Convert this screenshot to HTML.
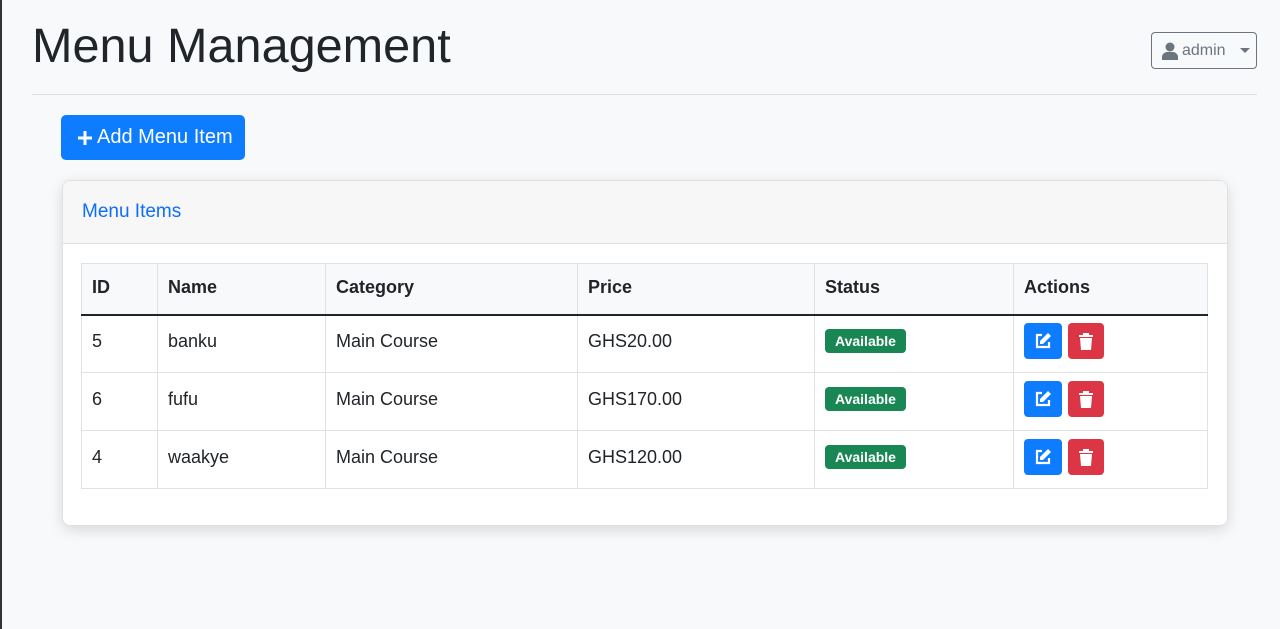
<!DOCTYPE html>
<html><head><style>
*{box-sizing:border-box}
body{margin:0;width:1280px;height:629px;background:#f8f9fa;font-family:"Liberation Sans",sans-serif;color:#212529;position:relative;overflow:hidden}
.lb{position:absolute;left:0;top:0;width:2px;height:629px;background:#333}
h1{position:absolute;left:32px;top:14px;margin:0;font-size:48.6px;font-weight:400;line-height:64px}
.hr{position:absolute;left:32px;top:94px;width:1225px;height:1px;background:#dcdee0}
.user{position:absolute;left:1151px;top:32px;width:106px;height:37px;border:1px solid #6c757d;border-radius:4px;color:#6c757d;font-size:16px;display:flex;align-items:center;padding-left:10px;gap:4px}
.caret{width:0;height:0;border-left:5px solid transparent;border-right:5px solid transparent;border-top:5px solid #6c757d;margin-left:10px}
.add{position:absolute;left:61px;top:115px;width:184px;height:45px;background:#0d7cff;border-radius:5px;color:#fff;font-size:20px;display:flex;align-items:center;padding-left:16px;gap:4px}
.card{position:absolute;left:62px;top:180px;width:1166px;height:346px;background:#fff;border:1px solid #dfe1e3;border-radius:8px;box-shadow:0 4px 14px rgba(0,0,0,.13);overflow:hidden}
.ch{height:63px;background:#f7f7f7;border-bottom:1px solid #dfe1e3;color:#0d6efd;font-size:19px;padding:20px 0 0 19px}
table{position:absolute;left:18px;top:82px;width:1127px;border-collapse:collapse;font-size:18px}
td,th{border:1px solid #dee2e6;text-align:left;padding:0 10px 5px;height:58px}
th{background:#f8f9fa;height:51px;border-bottom:2px solid #212529;font-weight:700;padding-bottom:2px}
.badge{display:inline-block;background:#198754;color:#fff;font-size:14px;font-weight:700;padding:4px 10px;border-radius:4px}
.b{display:inline-block;width:38px;height:36px;border-radius:4px;vertical-align:middle;position:relative;margin-right:6px}
.b svg{position:absolute;left:10px;top:9px}
.r{width:36px}
.r svg{left:9px}
</style></head><body>
<div class="lb"></div>
<h1>Menu Management</h1>
<div class="user"><svg width="16" height="18" viewBox="0 0 16 18"><circle cx="8" cy="5" r="4.5" fill="#6c757d"/><path d="M0 18v-3c0-3 3-5 5-5h6c2 0 5 2 5 5v3z" fill="#6c757d"/></svg>admin<span class="caret"></span></div>
<div class="hr"></div>
<div class="add"><svg width="16" height="16"><path d="M8 1v14M1 8h14" stroke="#fff" stroke-width="3"/></svg>Add Menu Item</div>
<div class="card"><div class="ch">Menu Items</div>
<table>
<tr><th style="width:76px">ID</th><th style="width:168px">Name</th><th style="width:252px">Category</th><th style="width:237px">Price</th><th style="width:199px">Status</th><th>Actions</th></tr>
<tr><td>5</td><td>banku</td><td>Main Course</td><td>GHS20.00</td><td><span class="badge">Available</span></td><td><span class="b" style="background:#0d7cff"><svg width="18" height="18" viewBox="0 0 18 18"><path d="M8 3H3v12h12v-5" stroke="#fff" stroke-width="2.2" fill="none"/><path d="M14 1l3 3-8 8H6V9z" fill="#fff"/></svg></span><span class="b r" style="background:#dc3545"><svg width="18" height="18" viewBox="0 0 18 18"><path d="M2 3h14v2H2zM6 1h6v2H6zM3 6h12l-1 12H4z" fill="#fff"/></svg></span></td></tr>
<tr><td>6</td><td>fufu</td><td>Main Course</td><td>GHS170.00</td><td><span class="badge">Available</span></td><td><span class="b" style="background:#0d7cff"><svg width="18" height="18" viewBox="0 0 18 18"><path d="M8 3H3v12h12v-5" stroke="#fff" stroke-width="2.2" fill="none"/><path d="M14 1l3 3-8 8H6V9z" fill="#fff"/></svg></span><span class="b r" style="background:#dc3545"><svg width="18" height="18" viewBox="0 0 18 18"><path d="M2 3h14v2H2zM6 1h6v2H6zM3 6h12l-1 12H4z" fill="#fff"/></svg></span></td></tr>
<tr><td>4</td><td>waakye</td><td>Main Course</td><td>GHS120.00</td><td><span class="badge">Available</span></td><td><span class="b" style="background:#0d7cff"><svg width="18" height="18" viewBox="0 0 18 18"><path d="M8 3H3v12h12v-5" stroke="#fff" stroke-width="2.2" fill="none"/><path d="M14 1l3 3-8 8H6V9z" fill="#fff"/></svg></span><span class="b r" style="background:#dc3545"><svg width="18" height="18" viewBox="0 0 18 18"><path d="M2 3h14v2H2zM6 1h6v2H6zM3 6h12l-1 12H4z" fill="#fff"/></svg></span></td></tr>
</table></div>
</body></html>
